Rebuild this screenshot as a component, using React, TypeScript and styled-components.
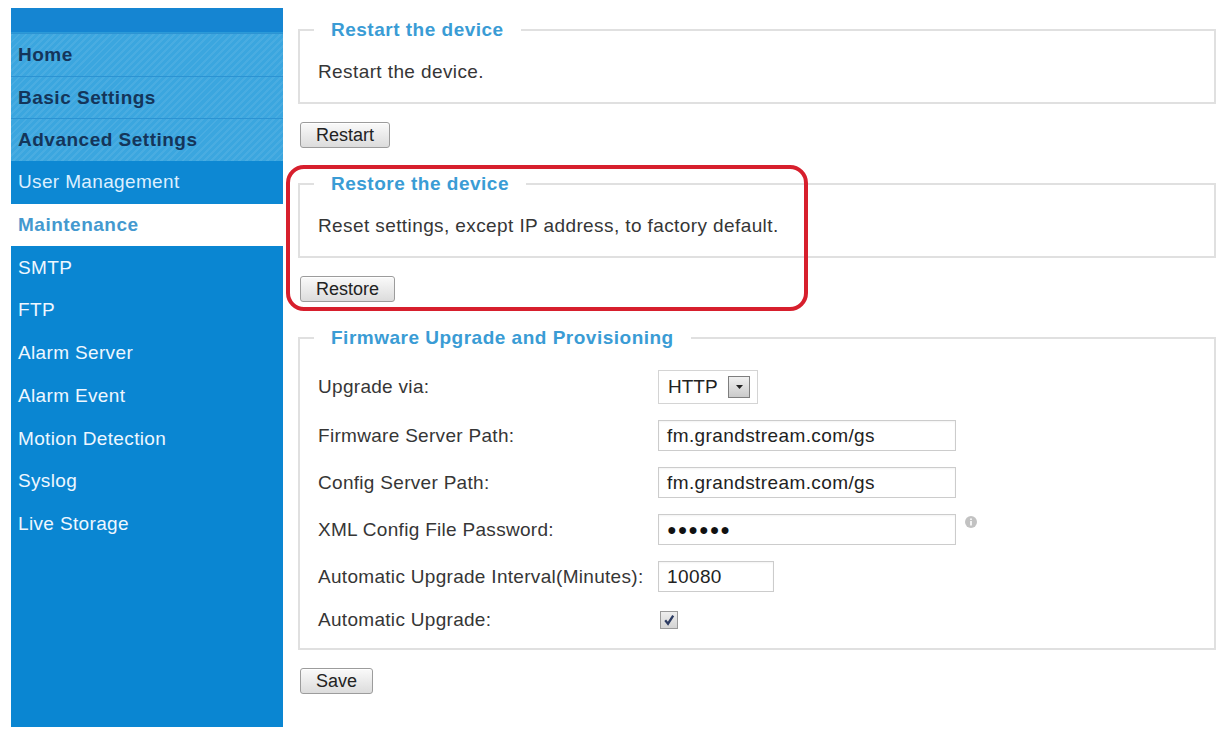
import React from 'react';
import styled, { createGlobalStyle, css } from 'styled-components';

const GlobalStyle = createGlobalStyle`
  html, body {
    margin: 0;
    padding: 0;
    background: #ffffff;
  }
  body {
    font-family: "Liberation Sans", Arial, sans-serif;
    color: #333333;
  }
`;

const Page = styled.div`
  display: flex;
  align-items: flex-start;
  height: 729px;
  padding-top: 8px;
  box-sizing: border-box;
  overflow: hidden;
`;

const Sidebar = styled.nav`
  width: 272px;
  height: 719px;
  margin-left: 11px;
  background: #0a86d2;
  display: flex;
  flex-direction: column;
  flex-shrink: 0;
`;

const SideHeader = styled.div`
  height: 25px;
  background: #1585d2;
  border-bottom: 1px solid #2a9ad9;
  box-sizing: border-box;
`;

type NavKind = 'top' | 'sub' | 'active' | 'plain';

const NavItem = styled.div<{ $kind: NavKind }>`
  height: 42.7px;
  box-sizing: border-box;
  display: flex;
  align-items: center;
  padding-left: 7px;
  font-size: 19px;
  letter-spacing: 0.35px;
  white-space: nowrap;

  ${({ $kind }) =>
    $kind === 'top' &&
    css`
      background-color: #3ba6df;
      background-image: repeating-linear-gradient(
        135deg,
        rgba(255, 255, 255, 0.07) 0 2px,
        rgba(0, 0, 0, 0) 2px 5px
      );
      border-top: 1px solid #2c93d3;
      color: #14355a;
      font-weight: bold;
      letter-spacing: 0.5px;
    `}

  ${({ $kind }) =>
    $kind === 'sub' &&
    css`
      background: #0d88d3;
      color: #dcefff;
    `}

  ${({ $kind }) =>
    $kind === 'active' &&
    css`
      background: #ffffff;
      color: #4499cf;
      font-weight: bold;
      letter-spacing: 0.5px;
    `}

  ${({ $kind }) =>
    $kind === 'plain' &&
    css`
      color: #eef7ff;
    `}
`;

const Content = styled.main`
  position: relative;
  width: 918px;
  margin-left: 15px;
  display: flex;
  flex-direction: column;
  align-items: flex-start;
`;

const Section = styled.fieldset<{ $first?: boolean }>`
  width: 100%;
  box-sizing: border-box;
  margin: ${({ $first }) => ($first ? '11px' : '25px')} 0 0;
  padding: 20px 18px 19px;
  border: 2px solid #e0e0e0;
  min-inline-size: 0;
`;

const FormSection = styled(Section)`
  padding: 21px 18px 16px;
`;

const Legend = styled.legend`
  margin-left: -4px;
  padding: 0 17px;
  font-size: 19px;
  line-height: 22px;
  font-weight: bold;
  letter-spacing: 0.5px;
  color: #3a9cd5;
`;

const Note = styled.p`
  margin: 0;
  font-size: 19px;
  line-height: 22px;
  letter-spacing: 0.4px;
  color: #363636;
`;

const Button = styled.button`
  margin: 18px 0 0 2px;
  height: 26px;
  padding: 0 15px;
  font-family: "Liberation Sans", Arial, sans-serif;
  font-size: 18px;
  color: #222222;
  border: 1px solid #9c9c9c;
  border-radius: 3px;
  background: linear-gradient(#fafafa, #dcdcdc);
  box-shadow: inset 0 1px 0 #ffffff;
`;

const Rows = styled.div`
  display: flex;
  flex-direction: column;
  gap: 16px;
`;

const Row = styled.div<{ $h: number }>`
  display: flex;
  align-items: center;
  min-height: ${({ $h }) => $h}px;
`;

const Label = styled.span`
  width: 340px;
  flex-shrink: 0;
  font-size: 19px;
  letter-spacing: 0.3px;
  color: #363636;
  white-space: nowrap;
`;

const TextBox = styled.div<{ $w: number }>`
  width: ${({ $w }) => $w}px;
  height: 31px;
  box-sizing: border-box;
  border: 1px solid #cccccc;
  box-shadow: inset 0 1px 2px rgba(0, 0, 0, 0.05);
  padding: 0 8px;
  display: flex;
  align-items: center;
  font-size: 19px;
  letter-spacing: 0.4px;
  color: #222222;
`;

const Dots = styled.span`
  font-size: 16px;
  font-weight: bold;
  letter-spacing: 1px;
  color: #111111;
`;

const Select = styled.div`
  width: 100px;
  height: 34px;
  box-sizing: border-box;
  border: 1px solid #d4d4d4;
  display: flex;
  align-items: center;
  justify-content: space-between;
  padding: 0 7px 0 9px;
  font-size: 19px;
  color: #222222;
`;

const Arrow = styled.span`
  width: 22px;
  height: 22px;
  box-sizing: border-box;
  border: 1px solid #7e7e7e;
  background: linear-gradient(#f0f0f0, #cacaca);
  display: flex;
  align-items: center;
  justify-content: center;
`;

const Info = styled.svg`
  margin-left: 9px;
  align-self: flex-start;
  margin-top: 2px;
`;

const Check = styled.span`
  margin-left: 2px;
  width: 18px;
  height: 18px;
  box-sizing: border-box;
  border: 1px solid #9a9a9a;
  background: linear-gradient(#eeeeee, #d4d4d4);
  display: flex;
  align-items: center;
  justify-content: center;
`;

// red call-out drawn on top of the restore block
const Callout = styled.div`
  position: absolute;
  left: -12px;
  top: 157px;
  width: 522px;
  height: 146px;
  box-sizing: border-box;
  border: 4px solid #d71f2d;
  border-radius: 18px;
  pointer-events: none;
`;

const topItems = ['Home', 'Basic Settings', 'Advanced Settings'];
const lowerItems = [
  'SMTP',
  'FTP',
  'Alarm Server',
  'Alarm Event',
  'Motion Detection',
  'Syslog',
  'Live Storage',
];

export default function App() {
  return (
    <>
      <GlobalStyle />
      <Page>
        <Sidebar>
          <SideHeader />
          {topItems.map(t => (
            <NavItem key={t} $kind="top">
              {t}
            </NavItem>
          ))}
          <NavItem $kind="sub">User Management</NavItem>
          <NavItem $kind="active">Maintenance</NavItem>
          {lowerItems.map(t => (
            <NavItem key={t} $kind="plain">
              {t}
            </NavItem>
          ))}
        </Sidebar>

        <Content>
          <Section $first>
            <Legend>Restart the device</Legend>
            <Note>Restart the device.</Note>
          </Section>
          <Button>Restart</Button>

          <Section>
            <Legend>Restore the device</Legend>
            <Note>Reset settings, except IP address, to factory default.</Note>
          </Section>
          <Button>Restore</Button>

          <FormSection>
            <Legend>Firmware Upgrade and Provisioning</Legend>
            <Rows>
              <Row $h={34}>
                <Label>Upgrade via:</Label>
                <Select>
                  HTTP
                  <Arrow>
                    <svg width="9" height="6" viewBox="0 0 9 6">
                      <path d="M1 1h7L4.5 5z" fill="#222" />
                    </svg>
                  </Arrow>
                </Select>
              </Row>
              <Row $h={31}>
                <Label>Firmware Server Path:</Label>
                <TextBox $w={298}>fm.grandstream.com/gs</TextBox>
              </Row>
              <Row $h={31}>
                <Label>Config Server Path:</Label>
                <TextBox $w={298}>fm.grandstream.com/gs</TextBox>
              </Row>
              <Row $h={31}>
                <Label>XML Config File Password:</Label>
                <TextBox $w={298}>
                  <Dots>●●●●●●</Dots>
                </TextBox>
                <Info width="12" height="12" viewBox="0 0 12 12">
                  <circle cx="6" cy="6" r="6" fill="#c2c2c2" />
                  <rect x="5.2" y="5" width="1.6" height="4.5" fill="#fff" />
                  <circle cx="6" cy="3.2" r="0.9" fill="#fff" />
                </Info>
              </Row>
              <Row $h={31}>
                <Label>Automatic Upgrade Interval(Minutes):</Label>
                <TextBox $w={116}>10080</TextBox>
              </Row>
              <Row $h={24}>
                <Label>Automatic Upgrade:</Label>
                <Check>
                  <svg width="12" height="12" viewBox="0 0 12 12">
                    <path
                      d="M2.2 6.3l2.8 3.4L10.2 1.6"
                      fill="none"
                      stroke="#2c3b62"
                      strokeWidth="2.3"
                    />
                  </svg>
                </Check>
              </Row>
            </Rows>
          </FormSection>
          <Button>Save</Button>

          <Callout />
        </Content>
      </Page>
    </>
  );
}
